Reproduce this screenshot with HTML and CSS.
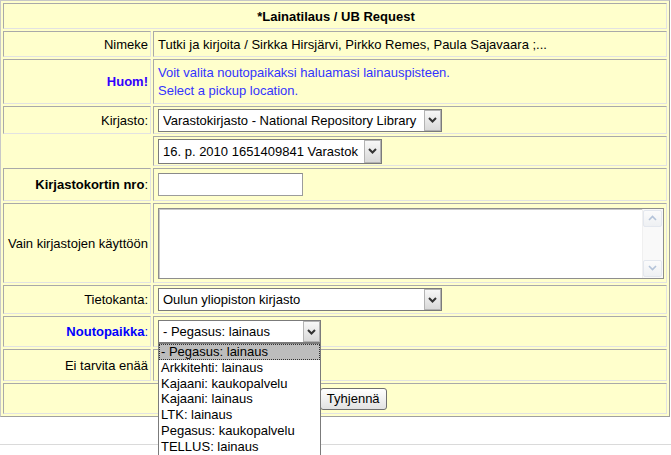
FILE: index.html
```html
<!DOCTYPE html>
<html lang="fi">
<head>
<meta charset="utf-8">
<title>Lainatilaus / UB Request</title>
<link rel="stylesheet" href="styles.css">
</head>
<body>
<form class="request">
<table class="form">
  <colgroup><col class="c-lbl"><col class="c-val"></colgroup>
  <tr class="r-head"><td colspan="2" class="head">*Lainatilaus / UB Request</td></tr>
  <tr class="r-title"><td class="lbl">Nimeke</td><td class="val">Tutki ja kirjoita / Sirkka Hirsjärvi, Pirkko Remes, Paula Sajavaara ;...</td></tr>
  <tr class="r-note"><td class="lbl note-lbl">Huom!</td><td class="val note">Voit valita noutopaikaksi haluamasi lainauspisteen.<br>Select a pickup location.</td></tr>
  <tr class="r-lib"><td class="lbl">Kirjasto:</td><td class="val">
    <span class="sel w-lib"><select><option>Varastokirjasto - National Repository Library</option></select><span class="sel-btn"><svg width="9" height="6" viewBox="0 0 9 6"><path d="M1 1l3.5 3.5L8 1" fill="none" stroke="#333" stroke-width="2"/></svg></span></span>
  </td></tr>
  <tr class="r-item"><td class="blank"></td><td class="val">
    <span class="sel w-item"><select><option>16. p. 2010 1651409841 Varastok</option></select><span class="sel-btn"><svg width="9" height="6" viewBox="0 0 9 6"><path d="M1 1l3.5 3.5L8 1" fill="none" stroke="#333" stroke-width="2"/></svg></span></span>
  </td></tr>
  <tr class="r-card"><td class="lbl"><b>Kirjastokortin nro</b>:</td><td class="val"><input class="txt" type="text"></td></tr>
  <tr class="r-memo"><td class="lbl">Vain kirjastojen käyttöön</td><td class="val">
    <span class="memo"><textarea></textarea><span class="vscroll"><span class="sb-btn"><svg width="9" height="6" viewBox="0 0 9 6"><path d="M1 5l3.5-3.5L8 5" fill="none" stroke="#b4c3d9" stroke-width="1.6"/></svg></span><span class="sb-track"></span><span class="sb-btn"><svg width="9" height="6" viewBox="0 0 9 6"><path d="M1 1l3.5 3.5L8 1" fill="none" stroke="#b4c3d9" stroke-width="1.6"/></svg></span></span></span>
  </td></tr>
  <tr class="r-db"><td class="lbl">Tietokanta:</td><td class="val">
    <span class="sel w-lib"><select><option>Oulun yliopiston kirjasto</option></select><span class="sel-btn"><svg width="9" height="6" viewBox="0 0 9 6"><path d="M1 1l3.5 3.5L8 1" fill="none" stroke="#333" stroke-width="2"/></svg></span></span>
  </td></tr>
  <tr class="r-pick"><td class="lbl pick-lbl"><b>Noutopaikka</b>:</td><td class="val">
    <span class="sel w-pick"><select><option>- Pegasus: lainaus</option></select><span class="sel-btn"><svg width="9" height="6" viewBox="0 0 9 6"><path d="M1 1l3.5 3.5L8 1" fill="none" stroke="#333" stroke-width="2"/></svg></span>
      <ul class="dropdown">
        <li class="active">- Pegasus: lainaus</li>
        <li>Arkkitehti: lainaus</li>
        <li>Kajaani: kaukopalvelu</li>
        <li>Kajaani: lainaus</li>
        <li>LTK: lainaus</li>
        <li>Pegasus: kaukopalvelu</li>
        <li>TELLUS: lainaus</li>
      </ul>
    </span>
  </td></tr>
  <tr class="r-until"><td class="lbl">Ei tarvita enää</td><td class="val"></td></tr>
  <tr class="r-btns"><td colspan="2" class="btns"><button type="submit" class="btn">OK</button> <button type="reset" class="btn">Tyhjennä</button></td></tr>
</table>
</form>
<div class="rule"></div>
</body>
</html>
```

FILE: styles.css
```css
html {
  overflow: hidden;
}
html, body {
  margin: 0;
  background: #fff;
}
body {
  min-height: 100vh;
  font: 13px "Liberation Sans", Arial, sans-serif;
  color: #000;
}
.request { margin: 0; }

.form {
  width: 670px;
  table-layout: fixed;
  border-collapse: separate;
  border-spacing: 2px;
  background: #ffffcc;
  border: 1px solid;
  border-color: #c8c8c8 #a0a0a0 #a0a0a0 #c8c8c8;
}
.c-lbl { width: 148px; }
.c-val { width: 514px; }
.form td {
  box-sizing: border-box;
  border: 1px solid;
  border-color: #a9a9a9 #e2e2e2 #e2e2e2 #a9a9a9;
  padding: 0 2px 0 4px;
  vertical-align: middle;
  white-space: nowrap;
}
.form td.lbl {
  text-align: right;
  padding: 0 2px;
}
.form td.blank { border: none; }
.form td.head {
  font-weight: bold;
  text-align: center;
}
.note-lbl {
  color: #3300ff;
  font-weight: bold;
}
.note {
  color: #3333ff;
  line-height: 18px;
}
.pick-lbl { color: #0000ff; }

.r-head { height: 26px; }
.r-title { height: 26px; }
.r-note { height: 45px; }
.r-lib { height: 28px; }
.r-item { height: 30px; }
.r-card { height: 33px; }
.r-memo { height: 80px; }
.r-db { height: 29px; }
.r-pick { height: 31px; }
.r-until { height: 32px; }
.r-btns { height: 31px; }

/* select boxes */
.sel {
  position: relative;
  display: inline-flex;
  vertical-align: middle;
}
.sel select {
  appearance: none;
  -webkit-appearance: none;
  box-sizing: border-box;
  width: 100%;
  height: 23px;
  margin: 0;
  padding: 0 20px 0 4px;
  border: 1px solid #7b7b7b;
  border-radius: 0;
  background: #fff;
  font: 13px "Liberation Sans", Arial, sans-serif;
  color: #000;
}
.w-lib { width: 284px; }
.w-item { width: 224px; }
.w-item select { height: 25px; }
.w-pick { width: 163px; }
.sel-btn {
  position: absolute;
  top: 1px;
  right: 1px;
  bottom: 1px;
  width: 17px;
  box-sizing: border-box;
  border: 1px solid #b3b3b3;
  background: linear-gradient(#f7f7f7, #d9d9d9);
  display: flex;
  align-items: center;
  justify-content: center;
  pointer-events: none;
}

/* open list */
.dropdown {
  position: absolute;
  left: 0;
  top: 100%;
  z-index: 5;
  box-sizing: border-box;
  width: 163px;
  margin: 0;
  padding: 0;
  list-style: none;
  background: #fff;
  border: 1px solid #7b7b7b;
}
.dropdown li {
  height: 15.8px;
  line-height: 15.8px;
  padding: 0 2px;
  white-space: nowrap;
  box-sizing: border-box;
}
.dropdown li.active {
  background: #bdbdbd;
  outline: 1px dotted #333;
  outline-offset: -1px;
}

/* text input */
.txt {
  box-sizing: border-box;
  width: 145px;
  height: 23px;
  margin: 0;
  border: 1px solid #9c9c9c;
  border-top-color: #8a8a8a;
  background: #fff;
  vertical-align: middle;
}

/* textarea with classic scrollbar */
.memo {
  display: flex;
  box-sizing: border-box;
  width: 506px;
  height: 71px;
  border: 1px solid #8e8e8e;
  box-shadow: inset 1px 1px 0 #c8c8c8;
  background: #fff;
  vertical-align: middle;
}
.memo textarea {
  flex: 1;
  border: none;
  outline: none;
  resize: none;
  margin: 0;
  padding: 2px;
  background: transparent;
  font: 13px "Liberation Sans", Arial, sans-serif;
}
.vscroll {
  width: 19px;
  display: flex;
  flex-direction: column;
  background: #f9f9f9;
  border-left: 1px solid #f0f0f0;
  padding: 1px 1px 1px 0;
}
.sb-btn {
  height: 17px;
  box-sizing: border-box;
  border: 1px solid #e3e7ee;
  border-radius: 2px;
  background: linear-gradient(#fbfbfb, #eef0f3);
  display: flex;
  align-items: center;
  justify-content: center;
}
.sb-track { flex: 1; }

/* buttons */
.btns { text-align: center; }
.form td.btns { padding: 0 4px; }
.btn {
  box-sizing: border-box;
  height: 22px;
  padding: 0 6px;
  margin: 0;
  border: 1px solid #6f6f6f;
  border-radius: 3px;
  background: linear-gradient(#ffffff, #e2e2e2);
  font: 13px "Liberation Sans", Arial, sans-serif;
  color: #000;
  vertical-align: middle;
}

.rule {
  margin-top: 27px;
  border-top: 1px solid #dadada;
}
```
